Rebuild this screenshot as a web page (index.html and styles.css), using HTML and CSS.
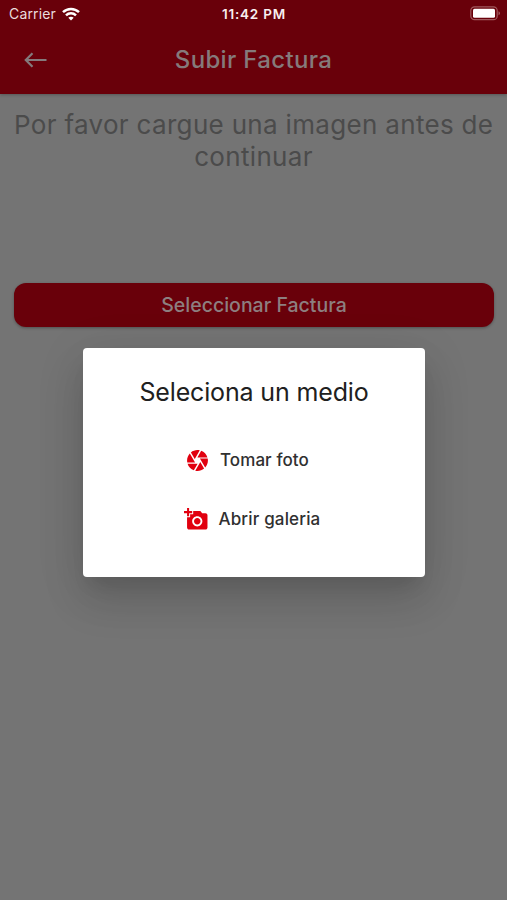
FILE: index.html
```html
<!DOCTYPE html>
<html lang="es">
<head>
<meta charset="utf-8">
<title>Subir Factura</title>
<link rel="stylesheet" href="styles.css">
</head>
<body>
<header class="appbar">
  <div class="status">
    <div class="carrier"><span>Carrier</span>
      <svg width="18" height="14" viewBox="0 0 18 14" fill="none" stroke="#fff" stroke-width="2.5"><path d="M1 5.2C5.500.8 12.500.8 17 5.200M4 8.300c2.800-2.700 7.200-2.700 10 0"/><path d="M6.300 10.800c1.500-1.400 3.900-1.400 5.400 0L9 13.500z" fill="#fff" stroke="none"/></svg>
    </div>
    <time class="clock">11:42 PM</time>
    <svg class="battery" width="31" height="15" viewBox="0 0 31 15"><rect x=".8" y=".8" width="26.400" height="12.900" rx="3.800" fill="none" stroke="#a0585d" stroke-width="1.200"/><rect x="3" y="2.700" width="22" height="9.100" rx="1.500" fill="#fff"/><path d="M28.500 5.200q1.500.5 1.500 2t-1.500 2z" fill="#a0585d"/></svg>
  </div>
  <div class="toolbar">
    <svg class="back" width="24" height="16" viewBox="0 0 24 16" fill="none" stroke="#847a7c" stroke-width="2.200"><path d="M22.500 8H2M8.500 1.300 1.800 8 8.500 14.700"/></svg>
    <h1>Subir Factura</h1>
  </div>
</header>
<main>
  <p class="hint"><span>Por favor cargue una imagen antes de</span> <span>continuar</span></p>
  <button class="select">Seleccionar Factura</button>
</main>
<section class="dialog" role="dialog">
  <h2>Seleciona un medio</h2>
  <div class="options">
    <button class="option camera"><svg width="25" height="25" viewBox="0 0 24 24"><path d="M9.400 10.500l4.770-8.260C13.470 2.090 12.750 2 12 2c-2.400 0-4.600.85-6.320 2.250l3.660 6.350.06-.1zM21.540 9c-.92-2.920-3.150-5.260-6-6.340L11.880 9h9.660zm.26 1h-7.490l.29.5 4.760 8.250C21 16.970 22 14.610 22 12c0-.69-.07-1.350-.2-2zM8.540 12l-3.900-6.750C3.010 7.030 2 9.390 2 12c0 .69.07 1.350.2 2h7.490l-1.150-2zm-6.080 3c.92 2.920 3.150 5.260 6 6.340L12.120 15H2.460zm11.270 0l-3.900 6.760c.7.150 1.420.24 2.170.24 2.400 0 4.600-.85 6.320-2.250l-3.660-6.350-.93 1.600z"/></svg><span>Tomar foto</span></button>
    <button class="option gallery"><svg width="24.500" height="24.500" viewBox="0 0 24 24"><path d="M3 4V1h2v3h3v2H5v3H3V6H0V4h3zm3 6V7h3V4h7l1.830 2H21c1.100 0 2 .9 2 2v12c0 1.100-.9 2-2 2H5c-1.100 0-2-.9-2-2V10h3zm7 9c2.760 0 5-2.240 5-5s-2.240-5-5-5-5 2.240-5 5 2.240 5 5 5zm-3.200-5c0 1.770 1.430 3.200 3.200 3.200s3.200-1.430 3.200-3.200-1.430-3.200-3.200-3.200-3.200 1.430-3.200 3.200z"/></svg><span>Abrir galeria</span></button>
  </div>
</section>
</body>
</html>
```
FILE: styles.css
```css
* { box-sizing: border-box; margin: 0; }
body {
  height: 900px;
  overflow: hidden;
  background: #747474;
  font-family: Inter, "Liberation Sans", sans-serif;
}
button { border: 0; padding: 0; font-family: inherit; }
.appbar {
  height: 94px;
  background: #69000a;
  box-shadow: 0 1px 3px rgba(0, 0, 0, .25);
}
.status {
  display: grid;
  grid-template-columns: 1fr auto 1fr;
  align-items: center;
  height: 27px;
  padding: 0 6px 0 9px;
  color: #fff;
}
.carrier { display: flex; align-items: center; gap: 6px; font-size: 14px; letter-spacing: .15px; color: #eadcdd; }
.clock { margin-right: 2px; font-size: 13.5px; font-weight: 600; letter-spacing: .8px; color: #f8efef; }
.battery { justify-self: end; }
.toolbar {
  display: grid;
  grid-template-columns: 1fr auto 1fr;
  align-items: center;
  height: 66px;
  padding: 0 24px;
}
.toolbar h1 { font-size: 24px; font-weight: 500; line-height: 30px; letter-spacing: .33px; color: #857a7b; }
main { padding: 15px 14px 0; }
.hint {
  height: 174px;
  color: #4b4b4b;
  font-size: 26px;
  line-height: 32px;
  letter-spacing: .32px;
  text-align: center;
}
.hint span { display: block; white-space: nowrap; }
.select {
  display: block;
  width: 480px;
  height: 44px;
  border-radius: 12px;
  background: #69000a;
  color: #8d7f80;
  font-size: 19.5px;
  font-weight: 500;
  box-shadow: 0 1px 3px rgba(0, 0, 0, .3);
}
.dialog {
  position: absolute;
  left: 83px;
  top: 348px;
  width: 342px;
  height: 229px;
  padding-top: 28px;
  border-radius: 4px;
  background: #fff;
  box-shadow: 0 14px 18px -8px rgba(0, 0, 0, .1), 0 24px 42px 2px rgba(0, 0, 0, .11), 0 9px 50px 5px rgba(0, 0, 0, .07);
}
.dialog h2 {
  margin-bottom: 23px;
  font-size: 25px;
  font-weight: 400;
  line-height: 32px;
  letter-spacing: -.15px;
  text-align: center;
  white-space: nowrap;
  color: #202020;
}
.options { padding-left: 101px; }
.option {
  display: flex;
  align-items: center;
  gap: 10px;
  height: 58px;
  background: none;
  color: #303030;
  font-size: 17px;
  font-weight: 500;
  white-space: nowrap;
}
.camera { margin-left: 1px; letter-spacing: .08px; }
.gallery { height: 60px; letter-spacing: .15px; }
.option svg { fill: #e1000f; }
```
